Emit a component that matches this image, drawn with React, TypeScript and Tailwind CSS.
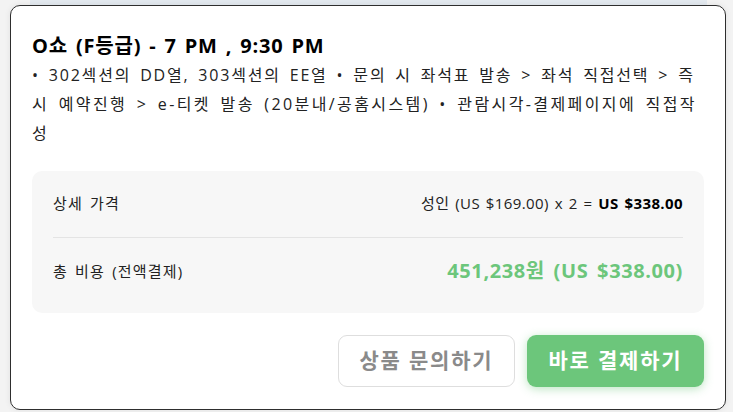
import React from "react";

export default function App() {
  const font = { fontFamily: '"Open Sans", "Noto Sans CJK KR", sans-serif' };
  return (
    <div className="relative w-[733px] h-[412px] overflow-hidden bg-[#f3f3f3]" style={font}>
      <div className="absolute left-[30px] right-[26px] top-0 h-[5px] bg-[#e3e9ef]" />
      <div className="relative pt-[5px] pl-[10px]">
        <div className="w-[716px] h-[405px] rounded-[10px] border border-[#2e2e2e] bg-white px-[21px] pt-[25px] shadow-[0_0_6px_rgba(0,0,0,0.08)]">
          <div className="text-[20px] font-bold leading-[30px] text-black tracking-[0.8px] [word-spacing:2px]">
            O쇼 (F등급) - 7 PM , 9:30 PM
          </div>
          <div className="text-[16px] leading-[29px] text-[#222] tracking-[1.8px] [word-spacing:3px] break-all">
            • 302섹션의 DD열, 303섹션의 EE열 • 문의 시 좌석표 발송 &gt; 좌석 직접선택 &gt; 즉
            <span className="tracking-[2.4px]">시 예약진행 &gt; e-티켓 발송 (20분내/공홈시스템) • 관람시각-결제페이지에 직접작</span>
            <br />성
          </div>
          <div className="mt-[23px] rounded-[10px] bg-[#f7f7f7] px-[21px]">
            <div className="flex items-center justify-between pt-[20px] pb-[22px] border-b border-[#e4e4e4]">
              <span className="text-[15px] leading-[24px] text-[#222] tracking-[1.2px] [word-spacing:2px]">상세 가격</span>
              <span className="text-[15px] leading-[24px] text-[#222] tracking-[0.4px] [word-spacing:1.5px]">
                성인 (US $169.00) x 2 = <span className="font-bold text-black">US $338.00</span>
              </span>
            </div>
            <div className="flex items-center justify-between pt-[19px] pb-[28px]">
              <span className="text-[15px] leading-[28px] text-[#222] tracking-[1.2px] [word-spacing:2px]">총 비용 (전액결제)</span>
              <span className="text-[20px] font-bold leading-[28px] text-[#6cc67b] tracking-[0.6px] [word-spacing:3px]">
                451,238원 (US $338.00)
              </span>
            </div>
          </div>
          <div className="mt-[22px] flex justify-end gap-[12px]">
            <button className="w-[177px] h-[52px] rounded-[9px] border border-[#dedede] bg-white text-[21px] font-bold text-[#8a8a8a] tracking-[1.8px]">
              상품 문의하기
            </button>
            <button className="w-[177px] h-[52px] rounded-[9px] bg-[#6cc67b] text-[21px] font-bold text-white tracking-[1.8px] shadow-[0_2px_10px_rgba(108,198,123,0.45)]">
              바로 결제하기
            </button>
          </div>
        </div>
      </div>
    </div>
  );
}
